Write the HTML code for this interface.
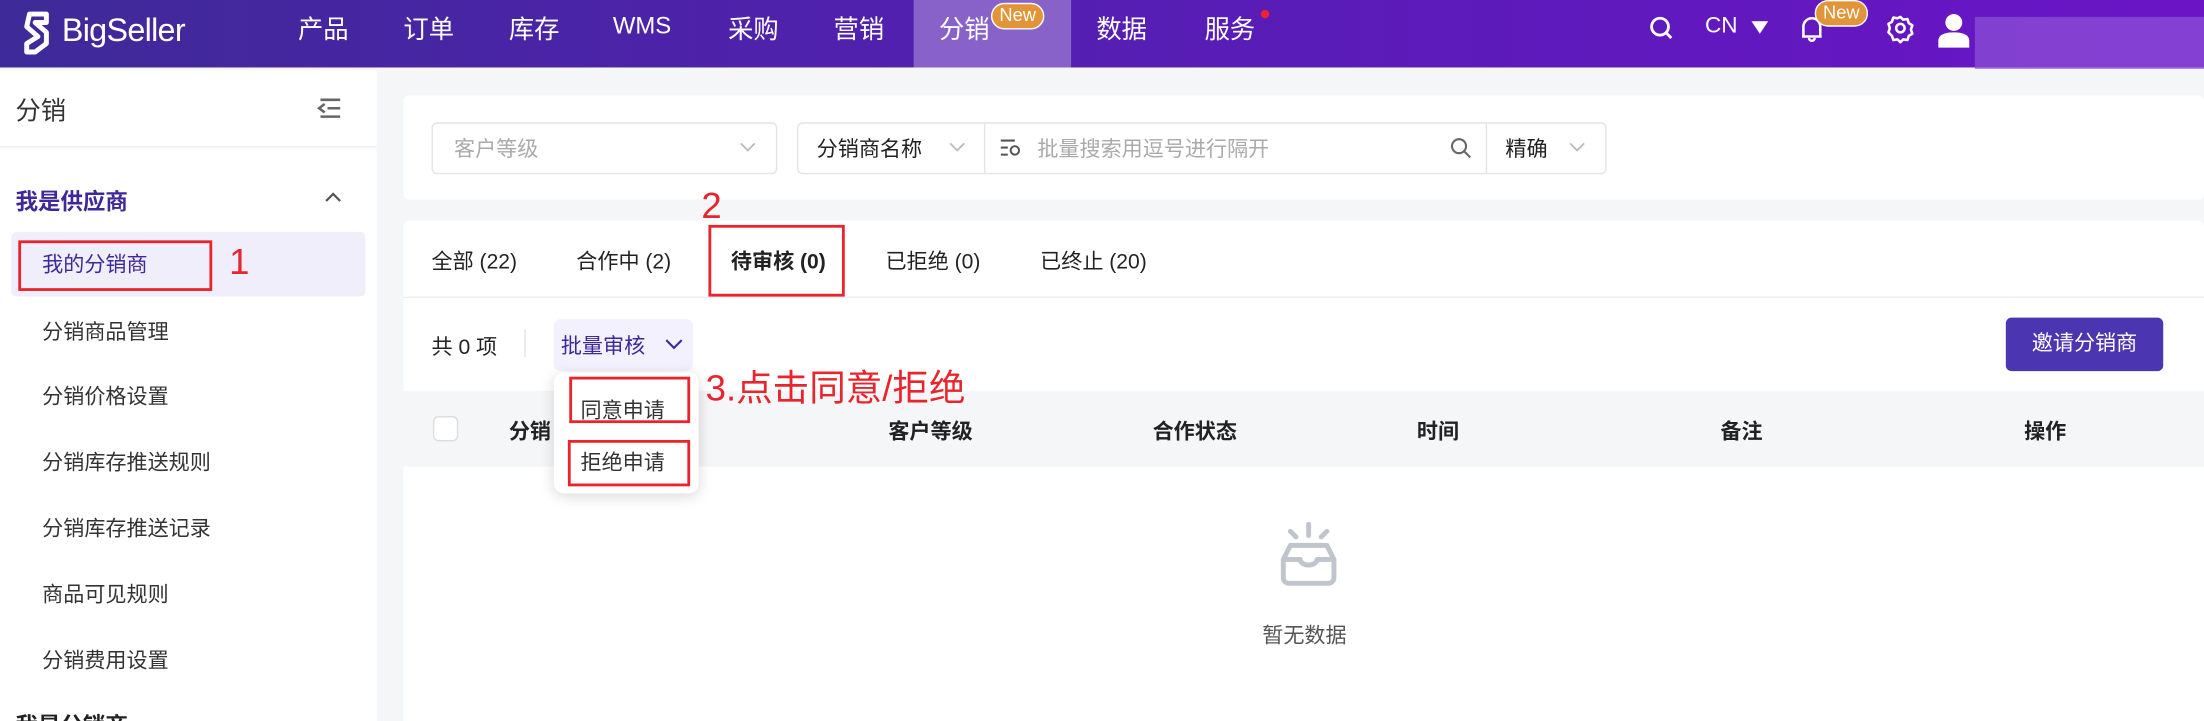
<!DOCTYPE html>
<html><head><meta charset="utf-8"><style>
*{margin:0;padding:0;box-sizing:border-box}
html,body{width:2204px;height:720px;overflow:hidden;background:#f5f6f8}
#w{position:absolute;left:0;top:0;width:1568px;height:513px;overflow:hidden;transform:scale(1.405612);transform-origin:0 0;font-family:"Liberation Sans","Noto Sans CJK SC",sans-serif;color:#222;font-size:15px;background:#f5f6f8}
.a{position:absolute;white-space:nowrap}
.hdr{position:absolute;left:0;top:0;width:1568px;height:48px;background:linear-gradient(90deg,#3e2a98,#5a1cb8 60%,#6a14c6)}
.nav{color:#fff;font-size:18px;top:7px}
.red{border:2px solid #e8242c;position:absolute}
.rt{color:#e8242c;position:absolute;white-space:nowrap}
.si{font-size:15px;color:#333;left:30px}
</style></head><body><div id="w">
<div class="hdr"></div>
<svg class="a" style="left:13px;top:7px" width="26" height="32" viewBox="0 0 26 32"><path d="M8 3 L20 3 L20 9 L12 9 L20 16 L20 24 L12 30 L6 30 L6 24 L14 19 L6 12 Z" fill="none" stroke="#fff" stroke-width="3.5" stroke-linejoin="round"/></svg>
<div class="a" style="left:44px;top:8px;color:#fff;font-size:23px;letter-spacing:-0.5px">BigSeller</div>
<div class="a" style="left:650px;top:0;width:112px;height:48px;background:#8862c8"></div>
<div class="a nav" style="left:212px">产品</div>
<div class="a nav" style="left:287px">订单</div>
<div class="a nav" style="left:362px">库存</div>
<div class="a nav" style="left:436px;top:9px;font-size:17px">WMS</div>
<div class="a nav" style="left:518px">采购</div>
<div class="a nav" style="left:593px">营销</div>
<div class="a nav" style="left:668px">分销</div>
<div class="a" style="left:705px;top:2px;width:38px;height:19px;border-radius:10px;background:#e29438;border:1px solid #fff;color:#fff;font-size:13px;text-align:center;line-height:16px">New</div>
<div class="a nav" style="left:780px">数据</div>
<div class="a nav" style="left:857px">服务</div>
<div class="a" style="left:897px;top:7px;width:6px;height:6px;border-radius:3px;background:#f5222d"></div>
<svg class="a" style="left:1172px;top:10px" width="20" height="20" viewBox="0 0 20 20"><circle cx="9" cy="9" r="6" fill="none" stroke="#fff" stroke-width="2"/><path d="M13.5 13.5L17 17" stroke="#fff" stroke-width="2"/></svg>
<div class="a" style="left:1213px;top:10px;color:#fff;font-size:16px">CN</div>
<svg class="a" style="left:1246px;top:15px" width="12" height="10"><path d="M0 0H12L6 9Z" fill="#fff"/></svg>
<svg class="a" style="left:1279px;top:9px" width="20" height="24" viewBox="0 0 20 24"><path d="M4 17V10a6 6 0 0112 0v7H3h14M8 18a2 2 0 004 0" fill="none" stroke="#fff" stroke-width="1.8"/></svg>
<div class="a" style="left:1291px;top:0;width:38px;height:19px;border-radius:10px;background:#e29438;border:1px solid #fff;color:#fff;font-size:13px;text-align:center;line-height:16px">New</div>
<svg class="a" style="left:1341px;top:9px" width="22" height="22" viewBox="0 0 22 22"><path d="M11 3l2 2 3-.5 1 3 2.5 1.5-1 3 1 3-2.5 1.5-1 3-3-.5-2 2-2-2-3 .5-1-3L2.5 14l1-3-1-3L5 6.5l1-3 3 .5z" fill="none" stroke="#fff" stroke-width="1.8" stroke-linejoin="round"/><circle cx="11" cy="11" r="3" fill="none" stroke="#fff" stroke-width="1.8"/></svg>
<svg class="a" style="left:1378px;top:8px" width="24" height="26" viewBox="0 0 24 26"><circle cx="12" cy="8" r="6" fill="#fff"/><path d="M1 26v-5c0-4 4-6 11-6s11 2 11 6v5z" fill="#fff"/></svg>
<div class="a" style="left:1405px;top:12px;width:163px;height:37px;background:#8c4fd6;opacity:.75"></div>
<!-- sidebar -->
<div class="a" style="left:0;top:50px;width:268px;height:470px;background:#fff"></div>
<div class="a" style="left:0;top:104px;width:268px;height:1px;background:#eee"></div>
<div class="a" style="left:11px;top:65px;font-size:18px;color:#333">分销</div>
<svg class="a" style="left:224px;top:69px" width="20" height="16"><path d="M4 2h14M9 8h9M4 14h14M7 5L3 8l4 3" fill="none" stroke="#666" stroke-width="1.8"/></svg>
<div class="a" style="left:11px;top:130px;font-size:16px;font-weight:bold;color:#3d2a98">我是供应商</div>
<svg class="a" style="left:230px;top:135px" width="14" height="10"><path d="M2 8l5-5 5 5" fill="none" stroke="#555" stroke-width="1.6"/></svg>
<div class="a" style="left:8px;top:165px;width:252px;height:46px;background:#f1eefb;border-radius:4px"></div>
<div class="a si" style="top:177px;color:#3d2a98">我的分销商</div>
<div class="red" style="left:13px;top:171px;width:138px;height:36px"></div>
<div class="rt" style="left:163px;top:171px;font-size:26px">1</div>
<div class="a si" style="top:225px">分销商品管理</div>
<div class="a si" style="top:271px">分销价格设置</div>
<div class="a si" style="top:318px">分销库存推送规则</div>
<div class="a si" style="top:365px">分销库存推送记录</div>
<div class="a si" style="top:412px">商品可见规则</div>
<div class="a si" style="top:459px">分销费用设置</div>
<div class="a" style="left:11px;top:503px;font-size:16px;font-weight:bold;color:#222">我是分销商</div>
<!-- filter panel -->
<div class="a" style="left:287px;top:68px;width:1281px;height:74px;background:#fff;border-radius:4px"></div>
<div class="a" style="left:307px;top:87px;width:246px;height:37px;border:1px solid #e3e3e8;border-radius:4px"></div>
<div class="a" style="left:323px;top:95px;color:#aaa">客户等级</div>
<svg class="a" style="left:526px;top:101px" width="12" height="8"><path d="M1 1l5 5 5-5" fill="none" stroke="#bbb" stroke-width="1.3"/></svg>
<div class="a" style="left:567px;top:87px;width:576px;height:37px;border:1px solid #e3e3e8;border-radius:4px"></div>
<div class="a" style="left:700px;top:87px;width:1px;height:37px;background:#e3e3e8"></div>
<div class="a" style="left:1057px;top:87px;width:1px;height:37px;background:#e3e3e8"></div>
<div class="a" style="left:581px;top:95px;color:#222">分销商名称</div>
<svg class="a" style="left:675px;top:101px" width="12" height="8"><path d="M1 1l5 5 5-5" fill="none" stroke="#bbb" stroke-width="1.3"/></svg>
<svg class="a" style="left:711px;top:98px" width="16" height="14"><path d="M1 2h10M1 7h5M1 12h5" stroke="#555" stroke-width="1.5"/><circle cx="11" cy="9" r="3" fill="none" stroke="#555" stroke-width="1.4"/></svg>
<div class="a" style="left:738px;top:95px;color:#aaa">批量搜索用逗号进行隔开</div>
<svg class="a" style="left:1031px;top:97px" width="16" height="16"><circle cx="7" cy="7" r="5" fill="none" stroke="#666" stroke-width="1.5"/><path d="M11 11l4 4" stroke="#666" stroke-width="1.5"/></svg>
<div class="a" style="left:1071px;top:95px;color:#222">精确</div>
<svg class="a" style="left:1116px;top:101px" width="12" height="8"><path d="M1 1l5 5 5-5" fill="none" stroke="#bbb" stroke-width="1.3"/></svg>
<!-- list panel -->
<div class="a" style="left:287px;top:157px;width:1281px;height:360px;background:#fff;border-radius:4px"></div>
<div class="a" style="left:287px;top:211px;width:1281px;height:1px;background:#eee"></div>
<div class="a" style="left:307px;top:175px">全部 (22)</div>
<div class="a" style="left:410px;top:175px">合作中 (2)</div>
<div class="a" style="left:520px;top:175px;font-weight:bold">待审核 (0)</div>
<div class="a" style="left:630px;top:175px">已拒绝 (0)</div>
<div class="a" style="left:740px;top:175px">已终止 (20)</div>
<div class="red" style="left:504px;top:160px;width:97px;height:51px"></div>
<div class="rt" style="left:499px;top:131px;font-size:26px">2</div>
<div class="a" style="left:307px;top:236px">共 0 项</div>
<div class="a" style="left:373px;top:234px;width:1px;height:20px;background:#e5e5e5"></div>
<div class="a" style="left:394px;top:227px;width:99px;height:37px;background:#f3f1fd;border-radius:5px"></div>
<div class="a" style="left:399px;top:235px;color:#3d2a98">批量审核</div>
<svg class="a" style="left:473px;top:241px" width="13" height="9"><path d="M1 1l5.5 5.5L12 1" fill="none" stroke="#3d2a98" stroke-width="1.5"/></svg>
<div class="a" style="left:1427px;top:226px;width:112px;height:38px;background:#4b35b0;border-radius:4px;color:#fff;text-align:center;line-height:38px">邀请分销商</div>
<div class="a" style="left:287px;top:278px;width:1281px;height:54px;background:#f5f6f8"></div>
<div class="a" style="left:308px;top:296px;width:18px;height:18px;border:1px solid #ddd;border-radius:4px;background:#fff"></div>
<div class="a" style="left:362px;top:296px;font-weight:bold">分销</div>
<div class="a" style="left:632px;top:296px;font-weight:bold">客户等级</div>
<div class="a" style="left:820px;top:296px;font-weight:bold">合作状态</div>
<div class="a" style="left:1008px;top:296px;font-weight:bold">时间</div>
<div class="a" style="left:1224px;top:296px;font-weight:bold">备注</div>
<div class="a" style="left:1440px;top:296px;font-weight:bold">操作</div>
<div class="a" style="left:394px;top:265px;width:103px;height:86px;background:#fff;border-radius:7px;box-shadow:0 2px 10px rgba(0,0,0,.15)"></div>
<div class="a" style="left:413px;top:281px;color:#333">同意申请</div>
<div class="a" style="left:413px;top:318px;color:#333">拒绝申请</div>
<div class="red" style="left:405px;top:268px;width:86px;height:33px"></div>
<div class="red" style="left:404px;top:313px;width:87px;height:33px"></div>
<div class="rt" style="left:502px;top:256px;font-size:26px">3.点击同意/拒绝</div>
<svg class="a" style="left:905px;top:370px" width="52" height="52" viewBox="0 0 52 52"><path d="M26 3v8M13 8l4 4M39 8l-4 4" stroke="#c0c4cc" stroke-width="3.5" stroke-linecap="round"/><path d="M8 28l5-10h26l5 10v13a4 4 0 01-4 4H12a4 4 0 01-4-4z M8 28h12a6 4 0 0012 0h12" fill="none" stroke="#c0c4cc" stroke-width="3.5" stroke-linejoin="round"/></svg>
<div class="a" style="left:898px;top:441px;color:#555">暂无数据</div>
</div></body></html>
